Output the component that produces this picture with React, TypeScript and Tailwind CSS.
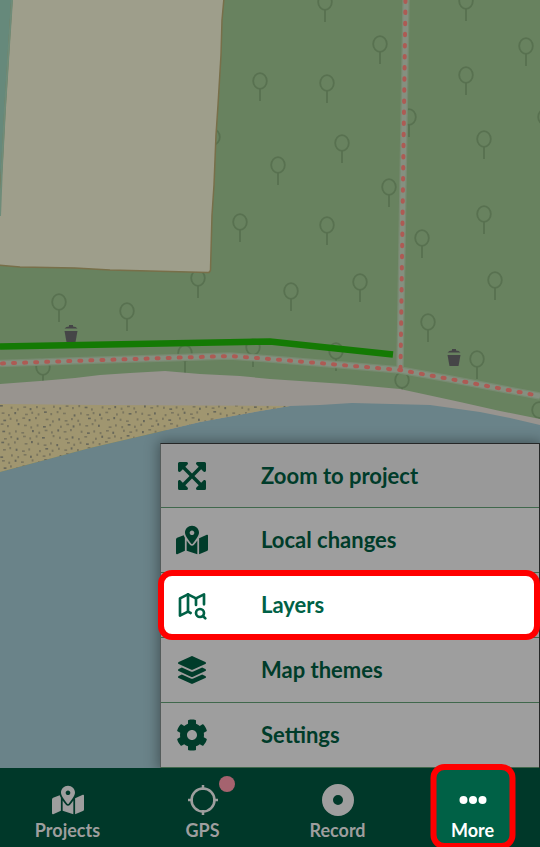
import type { ReactNode } from "react";
import { FaCog, FaExpandArrowsAlt, FaLayerGroup, FaMapMarkedAlt } from "react-icons/fa";
import { TbMapSearch } from "react-icons/tb";

const trees: [number, number][] = [
  [325, 2], [466, 1], [380, 44], [526, 46], [260, 81], [327, 83], [466, 75],
  [409, 117], [545, 117], [213, 137], [342, 143], [484, 139], [278, 165],
  [389, 187], [240, 222], [327, 225], [422, 238], [484, 214], [360, 282],
  [495, 280], [198, 278], [59, 302], [127, 311], [291, 291], [43, 367],
  [185, 353], [253, 347], [428, 322], [336, 351], [477, 359], [402, 380],
  [539, 410],
];

const bins: [number, number][] = [[71, 325], [454, 349]];

// Scattered grains for the beach, jittered on a loose grid.
const grains = Array.from({ length: 42 * 11 }, (_, i) => {
  const column = i % 42;
  const row = Math.floor(i / 42);
  const jitterX = ((i * 37 + row * 11) % 13) / 3;
  const jitterY = ((i * 53 + column * 7) % 11) / 3;
  return { x: column * 7 + jitterX, y: 405 + row * 6 + jitterY, wide: i % 3 === 0, dark: i % 4 === 0 };
});

function MapView() {
  return (
    <svg
      className="absolute inset-0 h-full w-full"
      viewBox="0 0 540 768"
      preserveAspectRatio="xMinYMin slice"
      role="img"
      aria-label="Map"
    >
      <defs>
        <clipPath id="beach">
          <path d="M0 404 L100 405 L290 406 L260 411 L200 422 L150 434 L90 448 L0 472 Z" />
        </clipPath>
      </defs>
      <rect width="540" height="768" fill="#68825f" />
      <g fill="none" stroke="#587150" strokeWidth="1.8">
        {trees.map(([x, y]) => (
          <g key={`${x}-${y}`}>
            <ellipse cx={x} cy={y} rx="6.8" ry="7.8" />
            <path d={`M${x} ${y + 8} V${y + 20}`} />
          </g>
        ))}
      </g>
      <path d="M0 0 H12 L0 216 Z" fill="#66897b" />
      <path
        d="M12 -2 L9 45 L5 108 L2 165 L-2 216 V265 L20 267 L75 268 L110 270 L150 271 L208 272.500 Q210 272.500 210.500 270 L212 215 L214 185 L216 135 L218 105 L221 55 L222 20 L224 -2 Z"
        fill="#9e9e8b"
        stroke="#786f49"
        strokeWidth="1.500"
      />
      <path d="M12 0 L9 45 L5 108 L2 165 L0 216" fill="none" stroke="#6f8c79" strokeWidth="2" />
      <path
        d="M0 384 L40 381 L75 378 L100 375 L130 373 L165 371 L200 374 L240 376 L270 379 L345 384 L400 389 L460 402 L500 411 L540 419 V430 H0 Z"
        fill="#98948f"
      />
      <path
        d="M0 472 L90 448 L150 434 L200 422 L260 411 L290 406 L320 405 L352 403 L430 405 L480 412 L510 418 L540 425 V768 H0 Z"
        fill="#6a8389"
      />
      <g clipPath="url(#beach)">
        <rect y="400" width="300" height="80" fill="#a09670" />
        {grains.map((g, i) => (
          <rect
            key={i}
            x={g.x}
            y={g.y}
            width={g.wide ? 2.8 : 1.8}
            height={g.wide ? 1.6 : 2.2}
            fill={g.dark ? "#67675a" : "#7b765f"}
          />
        ))}
      </g>
      <g fill="none" stroke="#788a71" strokeWidth="7.500">
        <path d="M406 0 L400 369" />
        <path d="M0 363.500 L70 361 L150 358.500 L230 356 L270 359 L330 364 L400 370 L450 379 L540 396" />
      </g>
      <g fill="none" stroke="#849080" strokeWidth="5">
        <path d="M406 0 L400 369" />
        <path d="M0 363.500 L70 361 L150 358.500 L230 356 L270 359 L330 364 L400 370 L450 379 L540 396" />
      </g>
      <g fill="none" stroke="#ad5b54" strokeWidth="4" strokeLinecap="round">
        <path d="M405.500 -1 L400.500 369" strokeDasharray="1.500 9.600" strokeDashoffset="-1.500" />
        <path
          d="M0 363.500 L70 361 L150 358.500 L230 356 L270 359 L330 364 L400 370 L450 379 L540 396"
          strokeDasharray="2 9.050"
          strokeDashoffset="-2"
        />
      </g>
      <g fill="#454547">
        {bins.map(([x, y]) => (
          <g key={x}>
            <path d={`M${x - 6.5} ${y + 3.5} Q${x - 5} ${y + 1.5} ${x - 2} ${y + 1.5} V${y} H${x + 2} V${y + 1.5} Q${x + 5} ${y + 1.5} ${x + 6.5} ${y + 3.5} Z`} />
            <path d={`M${x - 6.5} ${y + 6} H${x + 6.5} L${x + 4.5} ${y + 17} H${x - 4.5} Z`} />
          </g>
        ))}
      </g>
      <path d="M0 346.500 L270 341.500 L393 354.500" fill="none" stroke="#147a04" strokeWidth="6.500" />
    </svg>
  );
}

function MenuItem({ icon, label, first, selected }: { icon: ReactNode; label: string; first?: boolean; selected?: boolean }) {
  return (
    <li
      className={`relative border-b border-[#40684c] ${first ? "h-16 bg-[#999999]" : "h-[65px] bg-[#9e9e9e]"} ${selected ? "z-10" : ""}`}
    >
      {selected && (
        <span className="absolute -top-[3px] -right-px -bottom-[3px] -left-[3px] rounded-[14px] border-6 border-[#ff0000] bg-white" />
      )}
      <button
        type="button"
        className={`relative flex h-full w-full items-center gap-[53px] pl-[15px] text-left text-[22px] leading-7 font-bold ${selected ? "text-[#006146]" : "text-[#003c2a]"}`}
      >
        <span className="flex w-8 shrink-0 justify-center">{icon}</span>
        {label}
      </button>
    </li>
  );
}

function NavItem({ icon, label, badge, selected }: { icon: ReactNode; label: string; badge?: boolean; selected?: boolean }) {
  return (
    <button
      type="button"
      className={`relative flex flex-1 flex-col items-center gap-0.5 pt-4 pb-[5px] text-lg leading-6 font-bold ${selected ? "text-white" : "text-[#9e9e9e]"}`}
    >
      {selected && (
        <span className="absolute -top-1 -bottom-0.5 left-1/2 w-[85px] -translate-x-1/2 rounded-[14px] border-6 border-[#ff0000] bg-[#006146]" />
      )}
      <span className="relative flex h-8 items-center">
        {icon}
        {badge && <span className="absolute -top-2 -right-4 size-4 rounded-full bg-[#a5636f]" />}
      </span>
      <span className="relative">{label}</span>
    </button>
  );
}

function CrosshairIcon() {
  return (
    <svg className="size-8" viewBox="0 0 32 32" fill="none" stroke="currentColor" strokeWidth="2.500" aria-hidden="true">
      <circle cx="16" cy="16" r="11.500" />
      <path d="M16 1 V6 M16 26 V31 M1 16 H6 M26 16 H31" />
    </svg>
  );
}

function RecordIcon() {
  return (
    <svg className="size-8" viewBox="0 0 32 32" fill="none" stroke="currentColor" aria-hidden="true">
      <circle cx="16" cy="16" r="10.500" strokeWidth="11" />
    </svg>
  );
}

function DotsIcon() {
  return (
    <svg className="size-8" viewBox="0 0 32 32" fill="currentColor" aria-hidden="true">
      <circle cx="6.500" cy="16" r="4" />
      <circle cx="16" cy="16" r="4" />
      <circle cx="25.500" cy="16" r="4" />
    </svg>
  );
}

export default function App() {
  return (
    <div className="flex min-h-screen flex-col overflow-hidden bg-[#003829] font-['Lato','Noto_Sans',sans-serif]">
      <main className="relative flex-1">
        <MapView />
        <ul className="absolute right-0 bottom-0 w-[380px] max-w-full border-x border-t border-[#252727] border-l-[#555c5b] shadow-[0_0_12px_2px_rgba(0,0,0,0.35)]">
          <MenuItem first icon={<FaExpandArrowsAlt className="size-8" />} label="Zoom to project" />
          <MenuItem icon={<FaMapMarkedAlt className="size-8" />} label="Local changes" />
          <MenuItem selected icon={<TbMapSearch className="size-8 shrink-0" />} label="Layers" />
          <MenuItem icon={<FaLayerGroup className="size-7" />} label="Map themes" />
          <MenuItem icon={<FaCog className="size-8" />} label="Settings" />
        </ul>
      </main>
      <nav className="relative flex bg-[#003829]">
        <NavItem icon={<FaMapMarkedAlt className="size-8" />} label="Projects" />
        <NavItem badge icon={<CrosshairIcon />} label="GPS" />
        <NavItem icon={<RecordIcon />} label="Record" />
        <NavItem selected icon={<DotsIcon />} label="More" />
      </nav>
    </div>
  );
}
